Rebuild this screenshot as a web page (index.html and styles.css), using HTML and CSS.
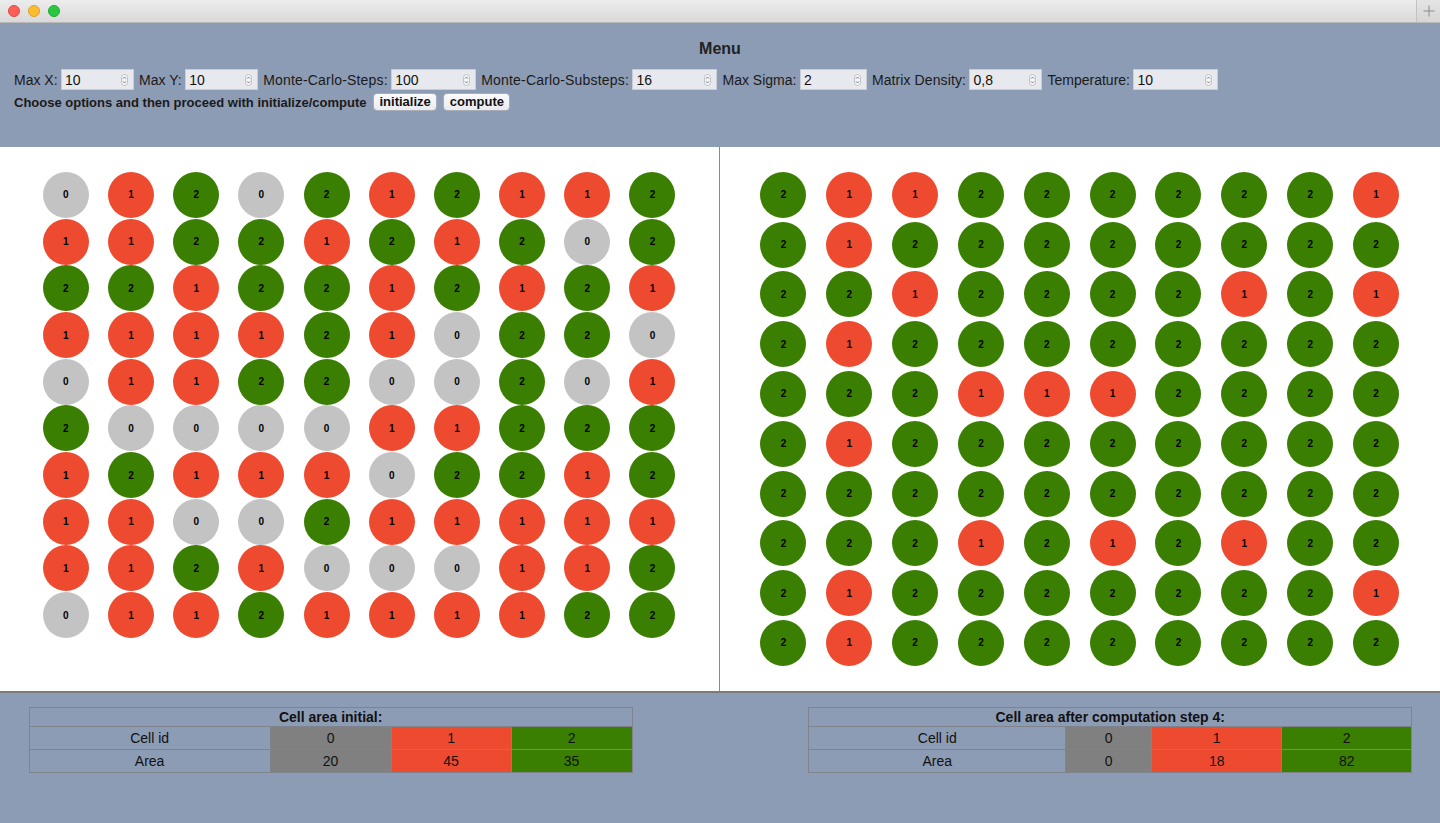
FILE: index.html
```html
<!DOCTYPE html>
<html>
<head>
<meta charset="utf-8">
<title>Cellular Potts</title>
<link rel="stylesheet" href="styles.css">
</head>
<body>
<div class="window">
  <div class="titlebar">
    <div class="lights">
      <span class="light red"></span>
      <span class="light yellow"></span>
      <span class="light green"></span>
    </div>
    <div class="newtab">
      <svg width="12" height="12" viewBox="0 0 12 12"><path d="M6 0.5V11.5M0.5 6H11.5" stroke="#8a8a8a" stroke-width="1" fill="none"/></svg>
    </div>
  </div>

  <div class="menu">
    <h1 class="menu-title">Menu</h1>
    <div class="options">
      <span class="lbl">Max X:</span>
      <span class="field w73"><span class="val">10</span><svg class="spin" width="7" height="12" viewBox="0 0 7 12"><rect x="0.5" y="0.5" width="6" height="11" rx="3" fill="#f4f5f7" stroke="#b5b8bf" stroke-width="0.8"/><path d="M2 4.6L3.5 3.1L5 4.6M2 7.4L3.5 8.9L5 7.4" stroke="#555" stroke-width="0.8" fill="none"/></svg></span>
      <span class="lbl">Max Y:</span>
      <span class="field w73"><span class="val">10</span><svg class="spin" width="7" height="12" viewBox="0 0 7 12"><rect x="0.5" y="0.5" width="6" height="11" rx="3" fill="#f4f5f7" stroke="#b5b8bf" stroke-width="0.8"/><path d="M2 4.6L3.5 3.1L5 4.6M2 7.4L3.5 8.9L5 7.4" stroke="#555" stroke-width="0.8" fill="none"/></svg></span>
      <span class="lbl lbl-wide">Monte-Carlo-Steps:</span>
      <span class="field w85"><span class="val">100</span><svg class="spin" width="7" height="12" viewBox="0 0 7 12"><rect x="0.5" y="0.5" width="6" height="11" rx="3" fill="#f4f5f7" stroke="#b5b8bf" stroke-width="0.8"/><path d="M2 4.6L3.5 3.1L5 4.6M2 7.4L3.5 8.9L5 7.4" stroke="#555" stroke-width="0.8" fill="none"/></svg></span>
      <span class="lbl lbl-wide">Monte-Carlo-Substeps:</span>
      <span class="field w85"><span class="val">16</span><svg class="spin" width="7" height="12" viewBox="0 0 7 12"><rect x="0.5" y="0.5" width="6" height="11" rx="3" fill="#f4f5f7" stroke="#b5b8bf" stroke-width="0.8"/><path d="M2 4.6L3.5 3.1L5 4.6M2 7.4L3.5 8.9L5 7.4" stroke="#555" stroke-width="0.8" fill="none"/></svg></span>
      <span class="lbl">Max Sigma:</span>
      <span class="field w67"><span class="val">2</span><svg class="spin" width="7" height="12" viewBox="0 0 7 12"><rect x="0.5" y="0.5" width="6" height="11" rx="3" fill="#f4f5f7" stroke="#b5b8bf" stroke-width="0.8"/><path d="M2 4.6L3.5 3.1L5 4.6M2 7.4L3.5 8.9L5 7.4" stroke="#555" stroke-width="0.8" fill="none"/></svg></span>
      <span class="lbl lbl-mid">Matrix Density:</span>
      <span class="field w73"><span class="val">0,8</span><svg class="spin" width="7" height="12" viewBox="0 0 7 12"><rect x="0.5" y="0.5" width="6" height="11" rx="3" fill="#f4f5f7" stroke="#b5b8bf" stroke-width="0.8"/><path d="M2 4.6L3.5 3.1L5 4.6M2 7.4L3.5 8.9L5 7.4" stroke="#555" stroke-width="0.8" fill="none"/></svg></span>
      <span class="lbl">Temperature:</span>
      <span class="field w85"><span class="val">10</span><svg class="spin" width="7" height="12" viewBox="0 0 7 12"><rect x="0.5" y="0.5" width="6" height="11" rx="3" fill="#f4f5f7" stroke="#b5b8bf" stroke-width="0.8"/><path d="M2 4.6L3.5 3.1L5 4.6M2 7.4L3.5 8.9L5 7.4" stroke="#555" stroke-width="0.8" fill="none"/></svg></span>
    </div>
    <div class="actions">
      <span class="hint">Choose options and then proceed with initialize/compute</span>
      <button class="btn">initialize</button>
      <button class="btn">compute</button>
    </div>
  </div>

  <div class="board">
    <div class="panel panel-left">
      <div class="grid grid-left">
        <div class="cell"><span class="dot c0">0</span></div><div class="cell"><span class="dot c1">1</span></div><div class="cell"><span class="dot c2">2</span></div><div class="cell"><span class="dot c0">0</span></div><div class="cell"><span class="dot c2">2</span></div><div class="cell"><span class="dot c1">1</span></div><div class="cell"><span class="dot c2">2</span></div><div class="cell"><span class="dot c1">1</span></div><div class="cell"><span class="dot c1">1</span></div><div class="cell"><span class="dot c2">2</span></div>
        <div class="cell"><span class="dot c1">1</span></div><div class="cell"><span class="dot c1">1</span></div><div class="cell"><span class="dot c2">2</span></div><div class="cell"><span class="dot c2">2</span></div><div class="cell"><span class="dot c1">1</span></div><div class="cell"><span class="dot c2">2</span></div><div class="cell"><span class="dot c1">1</span></div><div class="cell"><span class="dot c2">2</span></div><div class="cell"><span class="dot c0">0</span></div><div class="cell"><span class="dot c2">2</span></div>
        <div class="cell"><span class="dot c2">2</span></div><div class="cell"><span class="dot c2">2</span></div><div class="cell"><span class="dot c1">1</span></div><div class="cell"><span class="dot c2">2</span></div><div class="cell"><span class="dot c2">2</span></div><div class="cell"><span class="dot c1">1</span></div><div class="cell"><span class="dot c2">2</span></div><div class="cell"><span class="dot c1">1</span></div><div class="cell"><span class="dot c2">2</span></div><div class="cell"><span class="dot c1">1</span></div>
        <div class="cell"><span class="dot c1">1</span></div><div class="cell"><span class="dot c1">1</span></div><div class="cell"><span class="dot c1">1</span></div><div class="cell"><span class="dot c1">1</span></div><div class="cell"><span class="dot c2">2</span></div><div class="cell"><span class="dot c1">1</span></div><div class="cell"><span class="dot c0">0</span></div><div class="cell"><span class="dot c2">2</span></div><div class="cell"><span class="dot c2">2</span></div><div class="cell"><span class="dot c0">0</span></div>
        <div class="cell"><span class="dot c0">0</span></div><div class="cell"><span class="dot c1">1</span></div><div class="cell"><span class="dot c1">1</span></div><div class="cell"><span class="dot c2">2</span></div><div class="cell"><span class="dot c2">2</span></div><div class="cell"><span class="dot c0">0</span></div><div class="cell"><span class="dot c0">0</span></div><div class="cell"><span class="dot c2">2</span></div><div class="cell"><span class="dot c0">0</span></div><div class="cell"><span class="dot c1">1</span></div>
        <div class="cell"><span class="dot c2">2</span></div><div class="cell"><span class="dot c0">0</span></div><div class="cell"><span class="dot c0">0</span></div><div class="cell"><span class="dot c0">0</span></div><div class="cell"><span class="dot c0">0</span></div><div class="cell"><span class="dot c1">1</span></div><div class="cell"><span class="dot c1">1</span></div><div class="cell"><span class="dot c2">2</span></div><div class="cell"><span class="dot c2">2</span></div><div class="cell"><span class="dot c2">2</span></div>
        <div class="cell"><span class="dot c1">1</span></div><div class="cell"><span class="dot c2">2</span></div><div class="cell"><span class="dot c1">1</span></div><div class="cell"><span class="dot c1">1</span></div><div class="cell"><span class="dot c1">1</span></div><div class="cell"><span class="dot c0">0</span></div><div class="cell"><span class="dot c2">2</span></div><div class="cell"><span class="dot c2">2</span></div><div class="cell"><span class="dot c1">1</span></div><div class="cell"><span class="dot c2">2</span></div>
        <div class="cell"><span class="dot c1">1</span></div><div class="cell"><span class="dot c1">1</span></div><div class="cell"><span class="dot c0">0</span></div><div class="cell"><span class="dot c0">0</span></div><div class="cell"><span class="dot c2">2</span></div><div class="cell"><span class="dot c1">1</span></div><div class="cell"><span class="dot c1">1</span></div><div class="cell"><span class="dot c1">1</span></div><div class="cell"><span class="dot c1">1</span></div><div class="cell"><span class="dot c1">1</span></div>
        <div class="cell"><span class="dot c1">1</span></div><div class="cell"><span class="dot c1">1</span></div><div class="cell"><span class="dot c2">2</span></div><div class="cell"><span class="dot c1">1</span></div><div class="cell"><span class="dot c0">0</span></div><div class="cell"><span class="dot c0">0</span></div><div class="cell"><span class="dot c0">0</span></div><div class="cell"><span class="dot c1">1</span></div><div class="cell"><span class="dot c1">1</span></div><div class="cell"><span class="dot c2">2</span></div>
        <div class="cell"><span class="dot c0">0</span></div><div class="cell"><span class="dot c1">1</span></div><div class="cell"><span class="dot c1">1</span></div><div class="cell"><span class="dot c2">2</span></div><div class="cell"><span class="dot c1">1</span></div><div class="cell"><span class="dot c1">1</span></div><div class="cell"><span class="dot c1">1</span></div><div class="cell"><span class="dot c1">1</span></div><div class="cell"><span class="dot c2">2</span></div><div class="cell"><span class="dot c2">2</span></div>
      </div>
    </div>
    <div class="panel panel-right">
      <div class="grid grid-right">
        <div class="cell"><span class="dot c2">2</span></div><div class="cell"><span class="dot c1">1</span></div><div class="cell"><span class="dot c1">1</span></div><div class="cell"><span class="dot c2">2</span></div><div class="cell"><span class="dot c2">2</span></div><div class="cell"><span class="dot c2">2</span></div><div class="cell"><span class="dot c2">2</span></div><div class="cell"><span class="dot c2">2</span></div><div class="cell"><span class="dot c2">2</span></div><div class="cell"><span class="dot c1">1</span></div>
        <div class="cell"><span class="dot c2">2</span></div><div class="cell"><span class="dot c1">1</span></div><div class="cell"><span class="dot c2">2</span></div><div class="cell"><span class="dot c2">2</span></div><div class="cell"><span class="dot c2">2</span></div><div class="cell"><span class="dot c2">2</span></div><div class="cell"><span class="dot c2">2</span></div><div class="cell"><span class="dot c2">2</span></div><div class="cell"><span class="dot c2">2</span></div><div class="cell"><span class="dot c2">2</span></div>
        <div class="cell"><span class="dot c2">2</span></div><div class="cell"><span class="dot c2">2</span></div><div class="cell"><span class="dot c1">1</span></div><div class="cell"><span class="dot c2">2</span></div><div class="cell"><span class="dot c2">2</span></div><div class="cell"><span class="dot c2">2</span></div><div class="cell"><span class="dot c2">2</span></div><div class="cell"><span class="dot c1">1</span></div><div class="cell"><span class="dot c2">2</span></div><div class="cell"><span class="dot c1">1</span></div>
        <div class="cell"><span class="dot c2">2</span></div><div class="cell"><span class="dot c1">1</span></div><div class="cell"><span class="dot c2">2</span></div><div class="cell"><span class="dot c2">2</span></div><div class="cell"><span class="dot c2">2</span></div><div class="cell"><span class="dot c2">2</span></div><div class="cell"><span class="dot c2">2</span></div><div class="cell"><span class="dot c2">2</span></div><div class="cell"><span class="dot c2">2</span></div><div class="cell"><span class="dot c2">2</span></div>
        <div class="cell"><span class="dot c2">2</span></div><div class="cell"><span class="dot c2">2</span></div><div class="cell"><span class="dot c2">2</span></div><div class="cell"><span class="dot c1">1</span></div><div class="cell"><span class="dot c1">1</span></div><div class="cell"><span class="dot c1">1</span></div><div class="cell"><span class="dot c2">2</span></div><div class="cell"><span class="dot c2">2</span></div><div class="cell"><span class="dot c2">2</span></div><div class="cell"><span class="dot c2">2</span></div>
        <div class="cell"><span class="dot c2">2</span></div><div class="cell"><span class="dot c1">1</span></div><div class="cell"><span class="dot c2">2</span></div><div class="cell"><span class="dot c2">2</span></div><div class="cell"><span class="dot c2">2</span></div><div class="cell"><span class="dot c2">2</span></div><div class="cell"><span class="dot c2">2</span></div><div class="cell"><span class="dot c2">2</span></div><div class="cell"><span class="dot c2">2</span></div><div class="cell"><span class="dot c2">2</span></div>
        <div class="cell"><span class="dot c2">2</span></div><div class="cell"><span class="dot c2">2</span></div><div class="cell"><span class="dot c2">2</span></div><div class="cell"><span class="dot c2">2</span></div><div class="cell"><span class="dot c2">2</span></div><div class="cell"><span class="dot c2">2</span></div><div class="cell"><span class="dot c2">2</span></div><div class="cell"><span class="dot c2">2</span></div><div class="cell"><span class="dot c2">2</span></div><div class="cell"><span class="dot c2">2</span></div>
        <div class="cell"><span class="dot c2">2</span></div><div class="cell"><span class="dot c2">2</span></div><div class="cell"><span class="dot c2">2</span></div><div class="cell"><span class="dot c1">1</span></div><div class="cell"><span class="dot c2">2</span></div><div class="cell"><span class="dot c1">1</span></div><div class="cell"><span class="dot c2">2</span></div><div class="cell"><span class="dot c1">1</span></div><div class="cell"><span class="dot c2">2</span></div><div class="cell"><span class="dot c2">2</span></div>
        <div class="cell"><span class="dot c2">2</span></div><div class="cell"><span class="dot c1">1</span></div><div class="cell"><span class="dot c2">2</span></div><div class="cell"><span class="dot c2">2</span></div><div class="cell"><span class="dot c2">2</span></div><div class="cell"><span class="dot c2">2</span></div><div class="cell"><span class="dot c2">2</span></div><div class="cell"><span class="dot c2">2</span></div><div class="cell"><span class="dot c2">2</span></div><div class="cell"><span class="dot c1">1</span></div>
        <div class="cell"><span class="dot c2">2</span></div><div class="cell"><span class="dot c1">1</span></div><div class="cell"><span class="dot c2">2</span></div><div class="cell"><span class="dot c2">2</span></div><div class="cell"><span class="dot c2">2</span></div><div class="cell"><span class="dot c2">2</span></div><div class="cell"><span class="dot c2">2</span></div><div class="cell"><span class="dot c2">2</span></div><div class="cell"><span class="dot c2">2</span></div><div class="cell"><span class="dot c2">2</span></div>
      </div>
    </div>
  </div>

  <div class="stats">
    <table class="area area-initial">
      <colgroup><col class="ci-a"><col class="ci-b"><col class="ci-c"><col class="ci-d"></colgroup>
      <tr class="head"><th colspan="4">Cell area initial:</th></tr>
      <tr><td>Cell id</td><td class="t0">0</td><td class="t1">1</td><td class="t2">2</td></tr>
      <tr><td>Area</td><td class="t0">20</td><td class="t1">45</td><td class="t2">35</td></tr>
    </table>
    <table class="area area-after">
      <colgroup><col class="ca-a"><col class="ca-b"><col class="ca-c"><col class="ca-d"></colgroup>
      <tr class="head"><th colspan="4">Cell area after computation step 4:</th></tr>
      <tr><td>Cell id</td><td class="t0">0</td><td class="t1">1</td><td class="t2">2</td></tr>
      <tr><td>Area</td><td class="t0">0</td><td class="t1">18</td><td class="t2">82</td></tr>
    </table>
  </div>
</div>
</body>
</html>
```

FILE: styles.css
```css
* { box-sizing: border-box; }
html, body {
  margin: 0;
  padding: 0;
  width: 1440px;
  height: 823px;
  overflow: hidden;
  background: #8d9cb5;
  font-family: "Liberation Sans", Arial, Helvetica, sans-serif;
  color: #111;
}
.window {
  width: 1440px;
  height: 823px;
  display: flex;
  flex-direction: column;
  background: #8d9cb5;
}

/* title bar */
.titlebar {
  height: 23px;
  flex: 0 0 23px;
  display: flex;
  align-items: stretch;
  justify-content: space-between;
  background: linear-gradient(#ececec, #d9d9d9);
  border-bottom: 1px solid #b9b9b9;
}
.lights {
  display: flex;
  align-items: center;
  gap: 8px;
  padding-left: 8px;
}
.light {
  width: 12px;
  height: 12px;
  border-radius: 50%;
  display: block;
}
.light.red { background: #fc5f57; border: 0.5px solid #de4a42; }
.light.yellow { background: #fdbc2e; border: 0.5px solid #de9f22; }
.light.green { background: #2ac840; border: 0.5px solid #1daa2f; }
.newtab {
  width: 24px;
  display: flex;
  align-items: center;
  justify-content: center;
  border-left: 1px solid #c3c3c3;
  background: linear-gradient(#e4e4e4, #d6d6d6);
}

/* menu */
.menu {
  height: 124px;
  flex: 0 0 124px;
  padding: 17px 14px 0 14px;
}
.menu-title {
  margin: 0;
  text-align: center;
  font-size: 16px;
  line-height: 18px;
  font-weight: bold;
  color: #222;
}
.options {
  margin-top: 11px;
  display: flex;
  align-items: center;
  height: 21px;
  font-size: 14px;
  white-space: nowrap;
}
.lbl {
  margin-right: 3.5px;
  color: #1a1a1a;
}
.lbl-wide { letter-spacing: 0.18px; }
.lbl-mid { letter-spacing: 0.1px; }
.field {
  display: inline-flex;
  align-items: center;
  height: 21px;
  margin-right: 5px;
  padding: 0 5px 0 3px;
  background: #e7e9ef;
  border: 1px solid #c9cdd5;
  font-size: 14px;
  color: #111;
}
.field .val { flex: 1; }
.field .spin { flex: 0 0 7px; display: block; }
.w73 { width: 73px; }
.w85 { width: 85px; }
.w67 { width: 67px; }

.actions {
  margin-top: 2px;
  display: flex;
  align-items: center;
  height: 20px;
  font-size: 13px;
  font-weight: bold;
  white-space: nowrap;
}
.hint { margin-right: 6.5px; color: #1a1a1a; }
.btn {
  height: 18px;
  margin: 0 6px 0 0;
  padding: 0 5.5px;
  font-family: "Liberation Sans", Arial, Helvetica, sans-serif;
  font-size: 13px;
  font-weight: bold;
  line-height: 16px;
  color: #111;
  background: linear-gradient(#fbfbfc, #e9ebef);
  border: 1px solid #a9adb5;
  border-radius: 4px;
}

/* board */
.board {
  height: 544px;
  flex: 0 0 544px;
  display: flex;
  background: #fff;
}
.panel {
  height: 544px;
  background: #fff;
}
.panel-left {
  width: 720px;
  border-right: 1px solid #8a8a8a;
  padding: 24.6px 0 0 33.2px;
}
.panel-right {
  width: 720px;
  padding: 22.9px 0 0 30.5px;
}
.grid { display: grid; }
.grid-left {
  grid-template-columns: repeat(10, 65.2px);
  grid-template-rows: repeat(10, 46.7px);
}
.grid-right {
  grid-template-columns: repeat(10, 65.85px);
  grid-template-rows: repeat(10, 49.8px);
}
.cell {
  display: flex;
  align-items: center;
  justify-content: center;
}
.dot {
  width: 46px;
  height: 46px;
  border-radius: 50%;
  display: flex;
  align-items: center;
  justify-content: center;
  font-size: 10px;
  font-weight: bold;
  color: #000;
}
.c0 { background: #c3c3c3; }
.c1 { background: #ee4a30; }
.c2 { background: #3a7e02; }

/* stats */
.stats {
  flex: 1;
  border-top: 2px solid #7b7b7b;
  display: flex;
  align-items: flex-start;
  padding: 14px 0 0 28.6px;
  gap: 175.6px;
}
.area {
  width: 603px;
  border-collapse: collapse;
  table-layout: fixed;
  font-size: 14px;
}
.area th, .area td {
  border: 1px solid #7f848c;
  padding: 0;
  text-align: center;
  color: #111;
}
.area th {
  height: 19px;
  font-weight: bold;
  line-height: 17px;
}
.area td {
  height: 23px;
  line-height: 21px;
}
.t0 { background: #808080; }
.t1 { background: #ee4a30; }
.t2 { background: #3a7e02; }
.ci-a { width: 241px; }
.ci-b { width: 121px; }
.ci-c { width: 120px; }
.ci-d { width: 121px; }
.ca-a { width: 257px; }
.ca-b { width: 86px; }
.ca-c { width: 130px; }
.ca-d { width: 130px; }
```
